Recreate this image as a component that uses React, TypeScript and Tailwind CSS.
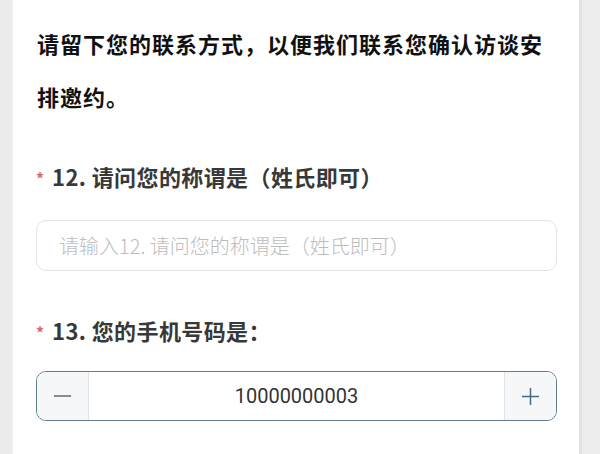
import React from "react";

const cjk = { fontFamily: '"Noto Sans CJK SC", "Noto Sans", sans-serif' };

function Label({ text }: { text: string }) {
  return (
    <div className="flex items-center h-[30px] text-[22px] tracking-[0.4px] font-semibold text-[#383838]">
      <span className="w-[16px] text-[16px] text-[#d96a6a] leading-none mt-[3px]">*</span>
      <span>{text}</span>
    </div>
  );
}

export default function App() {
  return (
    <div className="flex w-[600px] h-[454px] overflow-hidden bg-[#eeeeee]" style={cjk}>
      <div className="w-[13px] shrink-0 bg-[#ececec] border-r border-[#f4f4f4]" />
      <div className="flex-1 bg-white pt-[17px] pl-[23px] pr-[22px]">
        <h2 className="ml-[1px] text-[22px] tracking-[1px] font-bold leading-[53px] text-[#111]">
          请留下您的联系方式，以便我们联系您确认访谈安排邀约。
        </h2>

        <div className="mt-[38px]">
          <Label text="12. 请问您的称谓是（姓氏即可）" />
        </div>
        <div className="mt-[29px] h-[51px] rounded-[10px] border border-[#e2e2e2] flex items-center pl-[22px]">
          <span className="text-[20px] font-light text-[#bdbdbd]">请输入12. 请问您的称谓是（姓氏即可）</span>
        </div>

        <div className="mt-[44px]">
          <Label text="13. 您的手机号码是：" />
        </div>
        <div className="mt-[26px] h-[50px] rounded-[10px] border border-[#647d8d] flex overflow-hidden">
          <button className="w-[52px] shrink-0 bg-[#f5f7f9] border-r border-[#dfe4e8] flex items-center justify-center">
            <svg width="19" height="18" viewBox="0 0 19 18">
              <path d="M1 9h17" stroke="#5a6a76" strokeWidth="1.5" />
            </svg>
          </button>
          <div className="flex-1 flex items-center justify-center text-[20px] text-[#333]" style={{ fontFamily: "Roboto, sans-serif" }}>
            10000000003
          </div>
          <button className="w-[52px] shrink-0 bg-[#f5f7f9] border-l border-[#dfe4e8] flex items-center justify-center">
            <svg width="19" height="19" viewBox="0 0 19 19">
              <path d="M1 9.5h17M9.5 1v17" stroke="#4a6a80" strokeWidth="1.5" />
            </svg>
          </button>
        </div>
      </div>
      <div className="w-[21px] shrink-0 bg-[#ededed] border-l-[3px] border-[#e3e3e3]" />
    </div>
  );
}
